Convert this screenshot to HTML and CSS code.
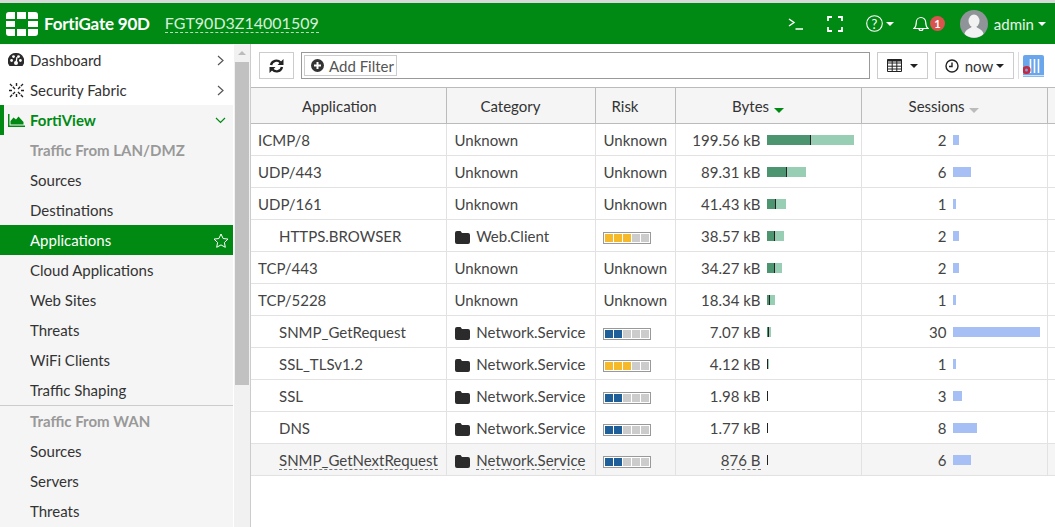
FILE: index.html
```html
<!DOCTYPE html>
<html lang="en">
<head>
    <meta charset="UTF-8">
    <title>FortiView Applications</title>
    <link rel="stylesheet" href="styles.css">
</head>
<body>
    <header class="topbar">
        <svg class="logo" width="32" height="24" viewBox="0 0 32 24" fill="#fff">
            <path d="M3 0h6v7H0V3a3 3 0 0 1 3-3zM11 0h9v7h-9zM22 0h7a3 3 0 0 1 3 3v4H22z"/>
            <path d="M0 9h9v6H0zM22 9h10v6H22z"/>
            <path d="M0 17h9v7H3a3 3 0 0 1-3-3zM11 17h9v7h-9zM22 17h10v4a3 3 0 0 1-3 3h-7z"/>
        </svg>
        <span class="brand">FortiGate 90D</span>
        <span class="serial">FGT90D3Z14001509</span>
        <div class="top-actions">
            <svg class="top-icon cli" width="15" height="12" viewBox="0 0 15 12" fill="none" stroke="#fff" stroke-width="1.4"><path d="M1 1l5 3.500-5 3.500M7.500 11H15"/></svg>
            <svg class="top-icon full" width="16" height="16" viewBox="0 0 16 16" fill="none" stroke="#fff" stroke-width="1.8"><path d="M5 1H1v4M11 1h4v4M1 11v4h4M15 11v4h-4"/></svg>
            <span class="help">
                <svg width="17" height="17" viewBox="0 0 17 17" fill="none" stroke="#fff" stroke-width="1.1"><circle cx="8.500" cy="8.500" r="7.800"/></svg>
                <span class="help-mark">?</span>
                <span class="caret"></span>
            </span>
            <span class="bell">
                <svg width="16" height="17" viewBox="0 0 16 17" fill="none" stroke="#fff" stroke-width="1.2"><path d="M1 13.500c1.800-1.500 2.300-3 2.300-6.300a4.700 4.700 0 0 1 9.400 0c0 3.300.5 4.800 2.300 6.300zM6 13.500a2 2 0 0 0 4 0"/></svg>
                <span class="badge">1</span>
            </span>
            <span class="user">
                <svg class="avatar" width="28" height="28" viewBox="0 0 28 28">
                    <circle cx="14" cy="14" r="14" fill="#8f9499"/>
                    <ellipse cx="14" cy="11" rx="5.500" ry="6.500" fill="#f2f2f2"/>
                    <path d="M4.500 24c1-5 6-5.500 7-7h5c1 1.500 6 2 7 7a14 14 0 0 1-19 0z" fill="#f2f2f2"/>
                </svg>
                admin
                <span class="caret"></span>
            </span>
        </div>
    </header>

    <div class="layout">
        <nav class="sidebar">
            <div class="nav-scroll">
                <div class="nav-item top">
                    <svg class="nav-icon" width="16" height="14" viewBox="0 0 16 14" fill="#2b2b2b"><path d="M8 0a8 8 0 0 0-6.500 13h13A8 8 0 0 0 8 0z"/><circle cx="3.600" cy="7.500" r="1.400" fill="#fff"/><circle cx="5.500" cy="3.600" r="1.400" fill="#fff"/><circle cx="10.500" cy="3.600" r="1.400" fill="#fff"/><circle cx="12.400" cy="7.500" r="1.400" fill="#fff"/><circle cx="8" cy="10" r="2" fill="#fff"/><path d="M8 10l1-6" stroke="#fff" stroke-width="1.300"/></svg>
                    Dashboard
                    <svg class="chev" width="7" height="11" viewBox="0 0 7 11" fill="none" stroke="#555" stroke-width="1.2"><path d="M1 1l5 4.500-5 4.500"/></svg>
                </div>
                <div class="nav-item top">
                    <svg class="nav-icon" width="17" height="17" viewBox="0 0 17 17" fill="none" stroke="#222" stroke-width="1.400"><path d="M2 2l5 5M10 10l5 5M15 2l-5 5M7 10l-5 5M8.500 1v4M1 8.500h4M16 8.500h-4M8.500 12v4" stroke-dasharray="3 1"/></svg>
                    Security Fabric
                    <svg class="chev" width="7" height="11" viewBox="0 0 7 11" fill="none" stroke="#555" stroke-width="1.2"><path d="M1 1l5 4.500-5 4.500"/></svg>
                </div>
                <div class="nav-item open">
                    <svg class="nav-icon" width="17" height="13" viewBox="0 0 17 13" fill="#008a14"><path d="M0 0h1.500v11.500H17V13H0z"/><path d="M2.500 10.500V7l3-3.500 2.500 2 2.500-3 5 5.500v2.500z"/></svg>
                    FortiView
                    <svg class="chev" width="11" height="7" viewBox="0 0 11 7" fill="none" stroke="#008a14" stroke-width="1.2"><path d="M1 1l4.500 4.500L10 1"/></svg>
                </div>
                <div class="nav-group">Traffic From LAN/DMZ</div>
                <div class="nav-sub">Sources</div>
                <div class="nav-sub">Destinations</div>
                <div class="nav-sub active">
                    Applications
                    <svg class="star" width="16" height="15" viewBox="0 0 16 15" fill="none" stroke="#fff" stroke-width="1"><path d="M8 1l2.100 4.500 4.900.6-3.600 3.400.9 4.800L8 11.900l-4.300 2.400.9-4.800L1 6.100l4.900-.6z"/></svg>
                </div>
                <div class="nav-sub">Cloud Applications</div>
                <div class="nav-sub">Web Sites</div>
                <div class="nav-sub">Threats</div>
                <div class="nav-sub">WiFi Clients</div>
                <div class="nav-sub">Traffic Shaping</div>
                <div class="nav-group divided">Traffic From WAN</div>
                <div class="nav-sub">Sources</div>
                <div class="nav-sub">Servers</div>
                <div class="nav-sub">Threats</div>
            </div>
            <div class="scrollbar">
                <span class="scroll-up"></span>
                <div class="scroll-thumb"></div>
            </div>
        </nav>

        <main class="content">
            <div class="toolbar">
                <button class="tool-btn refresh">
                    <svg width="15" height="14" viewBox="0 0 15 14" fill="none" stroke="#222" stroke-width="2.400"><path d="M2 6a5.500 5.500 0 0 1 9.500-2.500M13 8a5.500 5.500 0 0 1-9.500 2.500"/><path d="M14.500 0v6h-6zM.5 14V8h6z" fill="#222" stroke="none"/></svg>
                </button>
                <div class="filter-box">
                    <span class="add-filter">
                        <svg width="13" height="13" viewBox="0 0 13 13"><circle cx="6.500" cy="6.500" r="6.500" fill="#333"/><path d="M3 6.500h7M6.500 3v7" stroke="#fff" stroke-width="2"/></svg>
                        Add Filter
                    </span>
                </div>
                <button class="tool-btn grid-btn">
                    <svg width="15" height="13" viewBox="0 0 15 13" fill="none" stroke="#222" stroke-width="1"><path d="M.5.500h14v12H.5zM.5 4h14M.5 7.200h14M.5 10h14M5.200 2v10.500M9.800 2v10.500"/><path d="M.5 1.500h14" stroke-width="2"/></svg>
                    <span class="caret dark"></span>
                </button>
                <button class="tool-btn now-btn">
                    <svg width="14" height="14" viewBox="0 0 14 14" fill="none" stroke="#222" stroke-width="1.400"><circle cx="7" cy="7" r="6"/><path d="M7 3.500V7.500H4"/></svg>
                    now
                    <span class="caret dark"></span>
                </button>
                <span class="tool-sep"></span>
                <svg class="chart-icon" width="21" height="22" viewBox="0 0 21 22">
                    <path d="M2 0h17a2 2 0 0 1 2 2v18H0V2a2 2 0 0 1 2-2z" fill="#69a6ec"/>
                    <path d="M7.500 4v14M11.500 4v14M15.500 4v14" stroke="#fff" stroke-width="1.600"/>
                    <path d="M0 21.300h21" stroke="#8fb8ec" stroke-width="1.400"/>
                    <circle cx="3.500" cy="15" r="2.800" fill="none" stroke="#c8283c" stroke-width="2.600"/>
                </svg>
            </div>

            <table class="data-table">
                <colgroup>
                    <col class="col-app"><col class="col-cat"><col class="col-risk"><col class="col-bytes"><col class="col-sess"><col>
                </colgroup>
                <thead>
                    <tr>
                        <th>Application</th>
                        <th>Category</th>
                        <th>Risk</th>
                        <th>Bytes <span class="sort on"></span></th>
                        <th>Sessions <span class="sort"></span></th>
                        <th></th>
                    </tr>
                </thead>
                <tbody id="rows"></tbody>
            </table>
        </main>
    </div>

    <script>
        const rows = [
            { app: 'ICMP/8', bytes: '199.56 kB', dark: 43, light: 43, sessions: 2, sess: 6 },
            { app: 'UDP/443', bytes: '89.31 kB', dark: 19, light: 19, sessions: 6, sess: 18 },
            { app: 'UDP/161', bytes: '41.43 kB', dark: 8, light: 10, sessions: 1, sess: 3 },
            { app: 'HTTPS.BROWSER', sub: true, cat: 'Web.Client', risk: 3, bytes: '38.57 kB', dark: 7, light: 9, sessions: 2, sess: 6 },
            { app: 'TCP/443', bytes: '34.27 kB', dark: 7, light: 7, sessions: 2, sess: 6 },
            { app: 'TCP/5228', bytes: '18.34 kB', dark: 2, light: 5, sessions: 1, sess: 3 },
            { app: 'SNMP_GetRequest', sub: true, cat: 'Network.Service', risk: 2, bytes: '7.07 kB', dark: 1, light: 2, sessions: 30, sess: 87 },
            { app: 'SSL_TLSv1.2', sub: true, cat: 'Network.Service', risk: 3, bytes: '4.12 kB', dark: 0, light: 1, sessions: 1, sess: 3 },
            { app: 'SSL', sub: true, cat: 'Network.Service', risk: 2, bytes: '1.98 kB', dark: 0, light: 0, sessions: 3, sess: 9 },
            { app: 'DNS', sub: true, cat: 'Network.Service', risk: 2, bytes: '1.77 kB', dark: 0, light: 0, sessions: 8, sess: 24 },
            { app: 'SNMP_GetNextRequest', sub: true, cat: 'Network.Service', risk: 2, bytes: '876 B', dark: 0, light: 0, sessions: 6, sess: 18, hover: true }
        ];

        const folder = '<svg class="folder" width="15" height="13" viewBox="0 0 15 13" fill="#2b2b2b"><path d="M2 0h3.500L7 2h6a2 2 0 0 1 2 2v7a2 2 0 0 1-2 2H2a2 2 0 0 1-2-2V2a2 2 0 0 1 2-2z"/></svg>';

        function riskBar(level) {
            let cells = '';
            for (let i = 0; i < 5; i++) {
                const on = i < level ? (level === 3 ? ' med' : ' low') : '';
                cells += `<i class="risk-cell${on}"></i>`;
            }
            return `<span class="risk-bar">${cells}</span>`;
        }

        // Category and risk columns read "Unknown" when the row has no signature
        document.getElementById('rows').innerHTML = rows.map(r => `
            <tr class="${r.hover ? 'hover' : ''}">
                <td class="${r.sub ? 'sub' : 'top'}"><span class="${r.hover ? 'dashed' : ''}">${r.app}</span></td>
                <td>${r.cat ? `${folder} <span class="${r.hover ? 'dashed' : ''}">${r.cat}</span>` : 'Unknown'}</td>
                <td>${r.risk ? riskBar(r.risk) : 'Unknown'}</td>
                <td>
                    <div class="metric">
                        <span class="num"><span class="${r.hover ? 'dashed' : ''}">${r.bytes}</span></span>
                        <span class="bar"><i class="b-dark" style="width:${r.dark}px"></i><i class="b-mark"></i><i class="b-light" style="width:${r.light}px"></i></span>
                    </div>
                </td>
                <td>
                    <div class="metric">
                        <span class="num">${r.sessions}</span>
                        <span class="bar"><i class="b-sess" style="width:${r.sess}px"></i></span>
                    </div>
                </td>
                <td></td>
            </tr>`).join('');
    </script>
</body>
</html>
```

FILE: styles.css
```css
* {
    box-sizing: border-box;
}
html, body {
    height: 100%;
}
body {
    margin: 0;
    display: flex;
    flex-direction: column;
    overflow: hidden;
    background-color: #fff;
    font-family: Lato, "Open Sans", sans-serif;
    font-size: 15px;
    color: #444;
}
svg {
    display: block;
    flex: none;
}
.caret {
    display: inline-block;
    width: 0;
    height: 0;
    border-left: 4px solid transparent;
    border-right: 4px solid transparent;
    border-top: 4px solid #fff;
}
.caret.dark {
    border-top-color: #222;
}

/* Top bar */
.topbar {
    flex: none;
    height: 44px;
    display: flex;
    align-items: center;
    padding-left: 6px;
    background-color: #008a14;
    border-top: 3px solid #d9d9d9;
    color: #fff;
}
.logo {
    width: 32px;
    height: 24px;
}
.brand {
    margin-left: 6px;
    font-size: 17px;
    font-weight: 700;
    letter-spacing: -0.2px;
}
.serial {
    margin-left: 15px;
    font-size: 16px;
    color: #d8efdb;
    border-bottom: 1px dashed #b7dcbb;
    line-height: 18px;
}
.top-actions {
    margin-left: auto;
    display: flex;
    align-items: center;
}
.top-icon.full {
    margin-left: 24px;
}
.help {
    position: relative;
    margin-left: 23px;
    display: flex;
    align-items: center;
    gap: 3px;
}
.help-mark {
    position: absolute;
    left: 0;
    width: 17px;
    text-align: center;
    font-size: 13px;
}
.bell {
    margin-left: 19px;
    display: flex;
    align-items: center;
}
.badge {
    width: 15px;
    height: 15px;
    margin-left: 1px;
    border-radius: 50%;
    background-color: #d9534f;
    font-size: 11px;
    font-weight: 700;
    line-height: 15px;
    text-align: center;
}
.user {
    margin-left: 15px;
    margin-right: 9px;
    display: flex;
    align-items: center;
    gap: 6px;
    color: #e6f4e8;
    font-size: 15px;
}
.user .caret {
    margin-left: -2px;
}

/* Sidebar */
.layout {
    flex: 1;
    min-height: 0;
    display: flex;
}
.sidebar {
    flex: none;
    width: 251px;
    display: flex;
    overflow: hidden;
    border-right: 1px solid #ccc;
}
.nav-scroll {
    width: 233px;
    flex: none;
    padding-top: 1px;
    background-color: #f5f5f5;
}
.nav-item, .nav-sub, .nav-group {
    height: 30px;
    display: flex;
    align-items: center;
    white-space: nowrap;
}
.nav-item {
    position: relative;
    padding-left: 30px;
    color: #333;
}
.nav-item.top {
    background-color: #fff;
}
.nav-icon {
    position: absolute;
    left: 8px;
}
.chev {
    margin-left: auto;
    margin-right: 9px;
}
.nav-item.open {
    color: #008a14;
    font-weight: 700;
    box-shadow: inset 5px 0 0 -1px #008a14;
}
.nav-item.open .chev {
    margin-right: 7px;
}
.nav-sub {
    padding-left: 30px;
    color: #333;
}
.nav-sub.active {
    background-color: #008a14;
    color: #fff;
}
.star {
    margin-left: auto;
    margin-right: 4px;
}
.nav-group {
    padding-left: 30px;
    color: #999;
    font-weight: 700;
}
.nav-group.divided {
    height: 31px;
    border-top: 1px solid #ccc;
}
.scrollbar {
    flex: 1;
    position: relative;
    margin-left: 1px;
    background-color: #f1f1f1;
}
.scroll-up {
    position: absolute;
    top: 7px;
    left: 4px;
    width: 0;
    height: 0;
    border-left: 4px solid transparent;
    border-right: 4px solid transparent;
    border-bottom: 4px solid #bbb;
}
.scroll-thumb {
    position: absolute;
    top: 18px;
    left: 1px;
    right: 1px;
    height: 323px;
    background-color: #c1c1c1;
}

/* Toolbar */
.content {
    flex: 1;
    min-width: 0;
}
.toolbar {
    height: 43px;
    display: flex;
    align-items: center;
    padding-left: 8px;
    gap: 7px;
}
.tool-btn {
    height: 27px;
    display: flex;
    align-items: center;
    justify-content: center;
    padding: 0;
    background-color: #fff;
    border: 1px solid #ccc;
    font-family: inherit;
    font-size: 15px;
    color: #333;
}
.refresh {
    width: 35px;
}
.filter-box {
    width: 569px;
    height: 27px;
    display: flex;
    align-items: center;
    padding: 0 2px;
    border: 1px solid #999;
}
.add-filter {
    height: 21px;
    display: flex;
    align-items: center;
    gap: 5px;
    padding: 0 2px 0 6px;
    border: 1px solid #ccc;
    color: #555;
}
.grid-btn {
    width: 51px;
    gap: 8px;
}
.now-btn {
    width: 79px;
    gap: 6px;
}
.now-btn .caret {
    margin-left: -3px;
}
.tool-sep {
    width: 1px;
    height: 27px;
    margin: 0 -3px;
    background-color: #ddd;
}

/* Table */
.data-table {
    width: 804px;
    table-layout: fixed;
    border-collapse: collapse;
}
.col-app { width: 195px; }
.col-cat { width: 149px; }
.col-risk { width: 80px; }
.col-bytes { width: 186px; }
.col-sess { width: 186px; }
th {
    height: 36px;
    padding: 0 20px 0 0;
    background-color: #f5f5f5;
    border-top: 1px solid #bbb;
    border-bottom: 1px solid #bbb;
    border-right: 1px solid #bbb;
    font-weight: 400;
    color: #333;
    text-align: center;
}
th:first-child {
    padding-right: 18px;
}
th:last-child {
    border-right: 0;
}
td {
    height: 32px;
    padding: 0 0 0 8px;
    border-bottom: 1px solid #e2e2e2;
    border-right: 1px solid #e2e2e2;
    color: #444;
    white-space: nowrap;
}
td:last-child {
    border-right: 0;
}
td.top {
    padding-left: 7px;
}
td.sub {
    padding-left: 28px;
}
.hover td {
    background-color: #f5f5f5;
}
.dashed {
    border-bottom: 1px dashed #777;
}
.folder {
    display: inline-block;
    vertical-align: -2px;
    margin-right: 3px;
}
.sort {
    display: inline-block;
    width: 0;
    height: 0;
    margin-left: 1px;
    vertical-align: -1px;
    border-left: 5px solid transparent;
    border-right: 5px solid transparent;
    border-top: 5px solid #bbb;
}
.sort.on {
    border-top-color: #008a14;
}
.risk-bar {
    display: inline-flex;
    vertical-align: middle;
    gap: 1px;
    width: 48px;
    height: 12px;
    margin-left: -1px;
    padding: 1px;
    border: 1px solid #999;
    background-color: #fff;
}
.risk-cell {
    flex: 1;
    background-color: #ccc;
}
.risk-cell.low {
    background-color: #1f5f99;
}
.risk-cell.med {
    background-color: #f5b92a;
}
.metric {
    display: flex;
    align-items: center;
}
.num {
    width: 85px;
    margin-left: -8px;
    text-align: right;
}
.bar {
    margin-left: 6px;
    height: 10px;
    display: flex;
}
.bar i {
    display: block;
    height: 100%;
}
.b-dark {
    background-color: #4d9470;
}
.b-mark {
    width: 1px;
    background-color: #222;
}
.b-light {
    background-color: #98cfb4;
}
.b-sess {
    background-color: #a6c0f5;
}
```
